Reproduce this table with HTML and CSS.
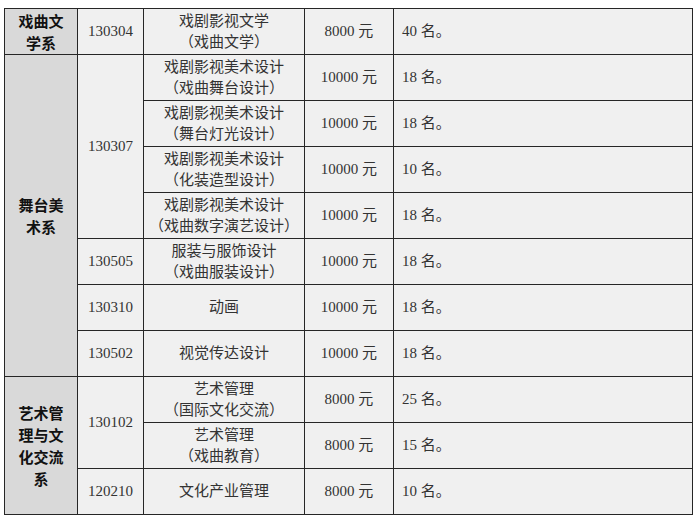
FILE: index.html
```html
<!DOCTYPE html>
<html lang="zh-CN">
<head>
<meta charset="utf-8">
<title>招生计划</title>
<link rel="stylesheet" href="styles.css">
</head>
<body>
<table class="plan">
  <colgroup>
    <col class="c-dept">
    <col class="c-code">
    <col class="c-major">
    <col class="c-fee">
    <col class="c-num">
  </colgroup>
  <tbody>
    <tr>
      <td class="dept">戏曲文学系</td>
      <td class="code">130304</td>
      <td class="major">戏剧影视文学<br>（戏曲文学）</td>
      <td class="fee">8000 元</td>
      <td class="num">40 名。</td>
    </tr>
    <tr>
      <td class="dept" rowspan="7">舞台美术系</td>
      <td class="code" rowspan="4">130307</td>
      <td class="major">戏剧影视美术设计<br>（戏曲舞台设计）</td>
      <td class="fee">10000 元</td>
      <td class="num">18 名。</td>
    </tr>
    <tr>
      <td class="major">戏剧影视美术设计<br>（舞台灯光设计）</td>
      <td class="fee">10000 元</td>
      <td class="num">18 名。</td>
    </tr>
    <tr>
      <td class="major">戏剧影视美术设计<br>（化装造型设计）</td>
      <td class="fee">10000 元</td>
      <td class="num">10 名。</td>
    </tr>
    <tr>
      <td class="major">戏剧影视美术设计<br>（戏曲数字演艺设计）</td>
      <td class="fee">10000 元</td>
      <td class="num">18 名。</td>
    </tr>
    <tr>
      <td class="code">130505</td>
      <td class="major">服装与服饰设计<br>（戏曲服装设计）</td>
      <td class="fee">10000 元</td>
      <td class="num">18 名。</td>
    </tr>
    <tr>
      <td class="code">130310</td>
      <td class="major">动画</td>
      <td class="fee">10000 元</td>
      <td class="num">18 名。</td>
    </tr>
    <tr>
      <td class="code">130502</td>
      <td class="major">视觉传达设计</td>
      <td class="fee">10000 元</td>
      <td class="num">18 名。</td>
    </tr>
    <tr>
      <td class="dept" rowspan="3">艺术管理与文化交流系</td>
      <td class="code" rowspan="2">130102</td>
      <td class="major">艺术管理<br>（国际文化交流）</td>
      <td class="fee">8000 元</td>
      <td class="num">25 名。</td>
    </tr>
    <tr>
      <td class="major">艺术管理<br>（戏曲教育）</td>
      <td class="fee">8000 元</td>
      <td class="num">15 名。</td>
    </tr>
    <tr>
      <td class="code">120210</td>
      <td class="major">文化产业管理</td>
      <td class="fee">8000 元</td>
      <td class="num">10 名。</td>
    </tr>
  </tbody>
</table>
</body>
</html>
```

FILE: styles.css
```css
html, body {
  margin: 0;
  padding: 0;
  background: #ffffff;
}

body {
  padding: 8px 0 0 4px;
  font-family: "Liberation Serif", "Noto Sans CJK SC", serif;
  font-size: 15px;
  color: #333333;
}

.plan {
  border-collapse: collapse;
  table-layout: fixed;
  width: 688px;
}

.c-dept { width: 73px; }
.c-code { width: 66px; }
.c-major { width: 161px; }
.c-fee { width: 89px; }
.c-num { width: 299px; }

.plan tr {
  height: 46px;
}

.plan td {
  border: 1.5px solid #262626;
  background: #f0f0f0;
  padding: 0;
  line-height: 21px;
  vertical-align: middle;
  text-align: center;
  font-weight: 400;
}

.plan td.dept {
  background: #d9d9d9;
  color: #111111;
  font-family: "Noto Sans CJK SC", sans-serif;
  font-weight: 700;
  padding: 0 8px;
  line-height: 22px;
  word-break: break-all;
}

.plan td.major {
  font-family: "Liberation Serif", "Noto Sans CJK SC", serif;
}

.plan td.num {
  text-align: left;
  padding-left: 8px;
}
```
